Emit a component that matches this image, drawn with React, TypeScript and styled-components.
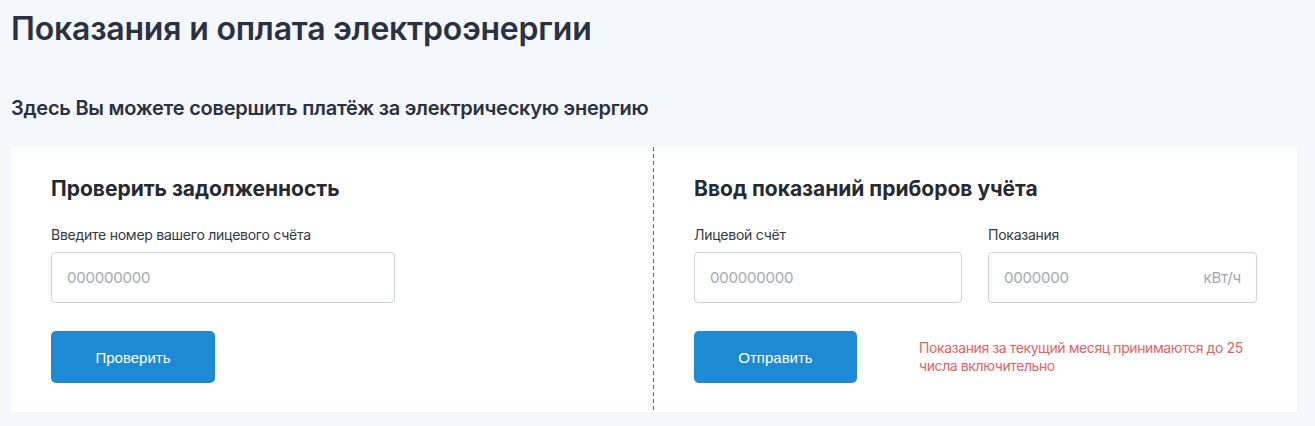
import React from "react";
import styled, { createGlobalStyle } from "styled-components";

const Global = createGlobalStyle`
  html, body { margin: 0; padding: 0; background: #f4f7fb; }
  body { font-family: Inter, "Noto Sans", sans-serif; }
  * { box-sizing: border-box; }
`;

const Page = styled.div`
  padding: 0 18px 0 11px;
`;

const Title = styled.h1`
  margin: 0;
  padding-top: 9px;
  font-size: 32px;
  line-height: 40px;
  font-weight: 600;
  color: #2b3142;
  letter-spacing: -0.2px;
`;

const Subtitle = styled.h2`
  margin: 45px 0 0;
  font-size: 20px;
  line-height: 28px;
  font-weight: 600;
  color: #2b3142;
  letter-spacing: -0.25px;
`;

const Card = styled.section`
  margin-top: 25px;
  background: #fff;
  display: grid;
  grid-template-columns: 642px 1fr;
  height: 265px;
`;

const Column = styled.div<{ $divider?: boolean }>`
  padding: 28px 40px 0 ${(p) => (p.$divider ? "41px" : "40px")};
  background-image: ${(p) =>
    p.$divider
      ? "repeating-linear-gradient(to bottom, #2a7aa3 0 4px, transparent 4px 7px)"
      : "none"};
  background-size: 1px 100%;
  background-repeat: no-repeat;
`;

const Heading = styled.h3`
  margin: 0;
  font-size: 21px;
  line-height: 28px;
  font-weight: 700;
  color: #262a33;
  letter-spacing: 0px;
`;

const Fields = styled.div`
  margin-top: 23px;
  display: grid;
  grid-template-columns: 268px 269px;
  column-gap: 26px;
`;

const Field = styled.label<{ $width?: number }>`
  display: flex;
  flex-direction: column;
  gap: 9px;
  width: ${(p) => (p.$width ? `${p.$width}px` : "auto")};
`;

const LabelText = styled.span`
  font-size: 14px;
  line-height: 17px;
  color: #333845;
  letter-spacing: -0.25px;
`;

const InputBox = styled.div`
  height: 51px;
  border: 1px solid #ccd1d9;
  border-radius: 4px;
  display: flex;
  align-items: center;
  justify-content: space-between;
  padding: 0 15px 0 15px;
  background: #fff;
`;

const Placeholder = styled.span`
  font-size: 15px;
  color: #a2a9b4;
  letter-spacing: -0.2px;
`;

const Actions = styled.div`
  margin-top: 28px;
  display: flex;
  align-items: center;
  gap: 62px;
`;

const Button = styled.button<{ $width: number }>`
  width: ${(p) => p.$width}px;
  height: 52px;
  border: none;
  border-radius: 5px;
  background: #1e8ad6;
  color: #fff;
  font-family: "Liberation Sans", Arial, sans-serif;
  font-size: 15px;
  font-weight: 400;
  cursor: pointer;
`;

const Note = styled.p`
  margin: 0;
  width: 330px;
  font-size: 14px;
  line-height: 18px;
  color: #ec5f5f;
  letter-spacing: -0.4px;
`;

export default function App() {
  return (
    <>
      <Global />
      <Page>
        <Title>Показания и оплата электроэнергии</Title>
        <Subtitle>Здесь Вы можете совершить платёж за электрическую энергию</Subtitle>
        <Card>
          <Column>
            <Heading>Проверить задолженность</Heading>
            <Fields>
              <Field $width={344}>
                <LabelText>Введите номер вашего лицевого счёта</LabelText>
                <InputBox>
                  <Placeholder>000000000</Placeholder>
                </InputBox>
              </Field>
            </Fields>
            <Actions>
              <Button $width={164}>Проверить</Button>
            </Actions>
          </Column>
          <Column $divider>
            <Heading>Ввод показаний приборов учёта</Heading>
            <Fields>
              <Field>
                <LabelText>Лицевой счёт</LabelText>
                <InputBox>
                  <Placeholder>000000000</Placeholder>
                </InputBox>
              </Field>
              <Field>
                <LabelText>Показания</LabelText>
                <InputBox>
                  <Placeholder>0000000</Placeholder>
                  <Placeholder>кВт/ч</Placeholder>
                </InputBox>
              </Field>
            </Fields>
            <Actions>
              <Button $width={163}>Отправить</Button>
              <Note>Показания за текущий месяц принимаются до 25 числа включительно</Note>
            </Actions>
          </Column>
        </Card>
      </Page>
    </>
  );
}
